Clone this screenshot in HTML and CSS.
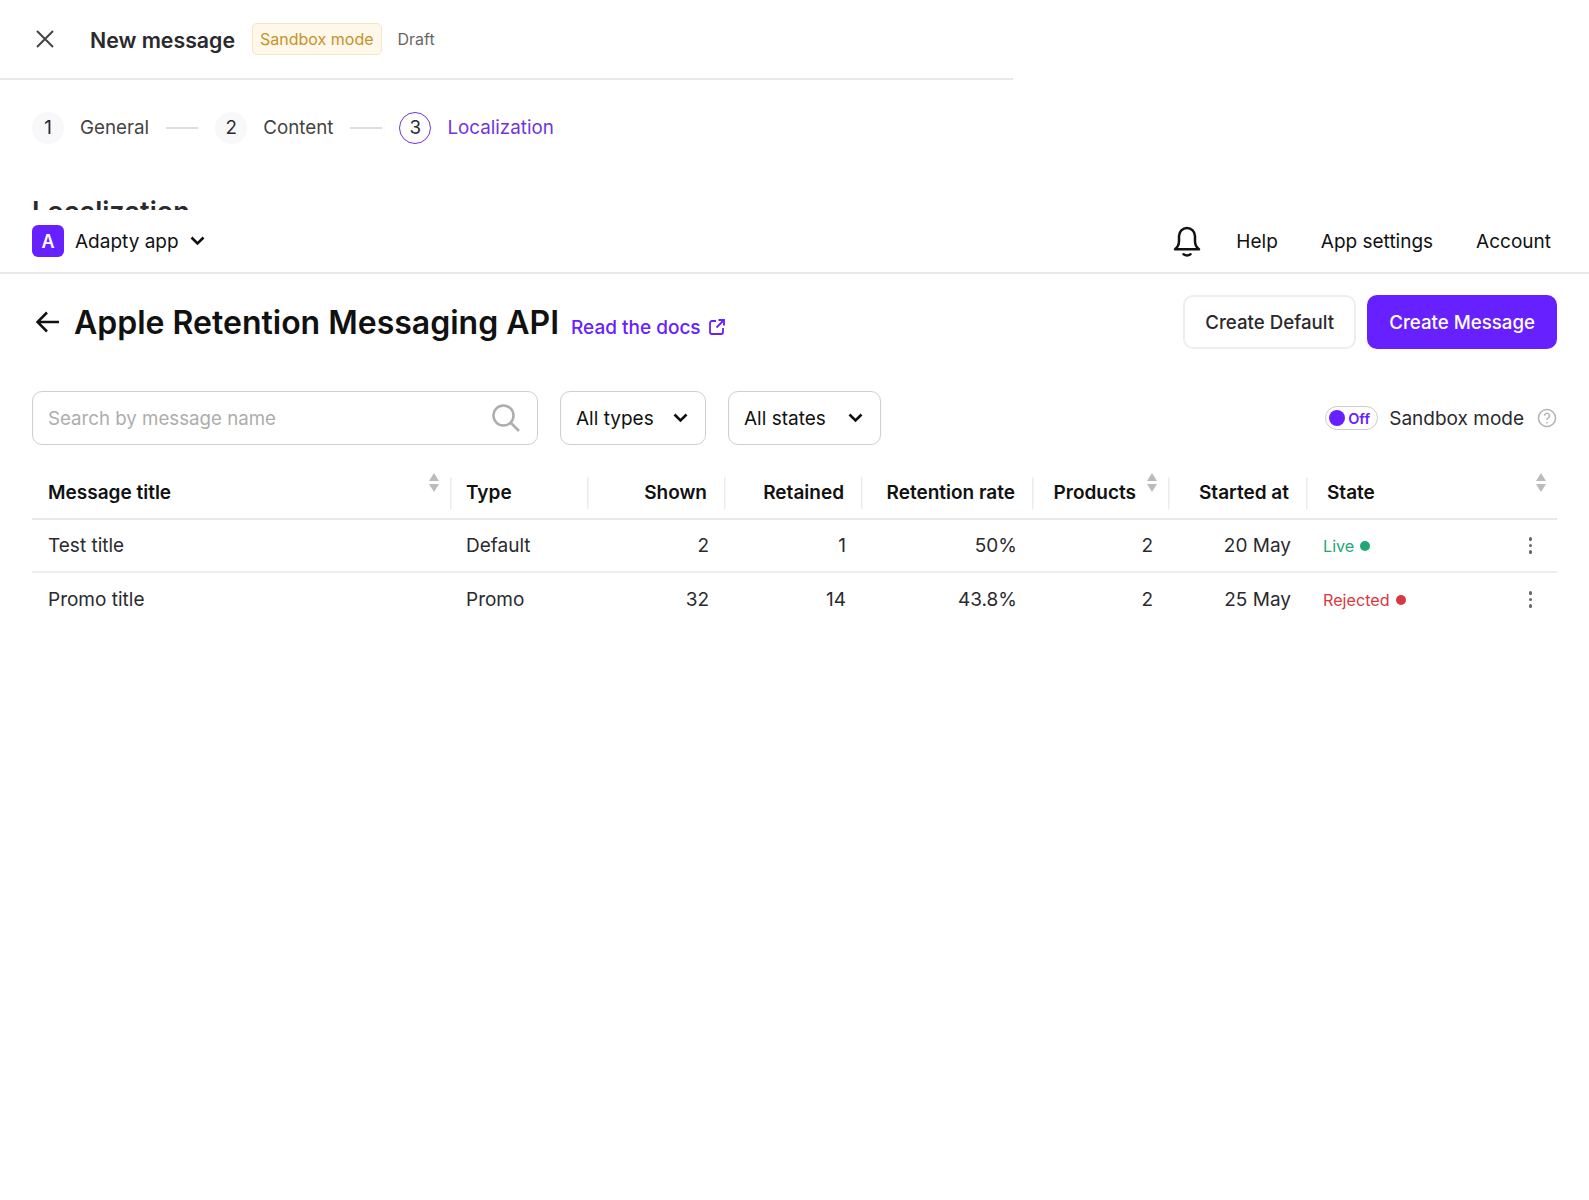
FILE: index.html
```html
<!DOCTYPE html>
<html lang="en">
<head>
<meta charset="UTF-8" />
<meta name="viewport" content="width=device-width, initial-scale=1" />
<title>Apple Retention Messaging API</title>
<link rel="stylesheet" href="styles.css">
</head>
<body>
  <section class="composer">
    <header class="composer-head">
      <svg class="close-icon" viewBox="0 0 18 18" width="18" height="18"><path d="M1 1l16 16M17 1L1 17" /></svg>
      <h2 class="composer-title">New message</h2>
      <span class="sandbox-tag">Sandbox mode</span>
      <span class="draft">Draft</span>
    </header>
    <ol class="steps">
      <li class="step"><span class="step-num">1</span>General</li>
      <li class="step-line"></li>
      <li class="step"><span class="step-num">2</span>Content</li>
      <li class="step-line"></li>
      <li class="step active"><span class="step-num">3</span>Localization</li>
    </ol>
    <h3 class="composer-section">Localization</h3>
  </section>

  <nav class="topbar">
    <div class="app-switch">
      <span class="app-logo">A</span>
      <span>Adapty app</span>
      <svg class="chevron" viewBox="0 0 15 10" width="15" height="10"><path d="M1.500 1.500L7.500 7.500l6-6" /></svg>
    </div>
    <div class="topbar-links">
      <svg class="bell" viewBox="0 0 28 32" width="28" height="32"><path d="M2 24.200c2.700-1.800 4-4 4-8.200V11a8 8 0 0 1 16 0v5c0 4.200 1.300 6.400 4 8.200z" /><path d="M10.500 29.200c2 1.400 5 1.400 7 0" /></svg>
      <a>Help</a>
      <a>App settings</a>
      <a>Account</a>
    </div>
  </nav>

  <main class="page">
    <div class="title-row">
      <svg class="back" viewBox="0 0 24 22" width="24" height="22"><path d="M23 11H2M11 1.500L1.500 11l9.500 9.500" /></svg>
      <h1 class="page-title">Apple Retention Messaging API</h1>
      <a class="docs-link">Read the docs
        <svg viewBox="0 0 16 16" width="16" height="16"><path d="M7 2H3a2 2 0 0 0-2 2v9a2 2 0 0 0 2 2h9a2 2 0 0 0 2-2V9M9.500 1H15v5.500M15 1L7.500 8.500" /></svg>
      </a>
      <div class="title-actions">
        <button type="button" class="btn">Create Default</button>
        <button type="button" class="btn primary">Create Message</button>
      </div>
    </div>

    <div class="filters">
      <div class="search">
        <span>Search by message name</span>
        <svg viewBox="0 0 28 28" width="28" height="28"><circle cx="11.500" cy="11.500" r="10" /><path d="M19 19l8 8" /></svg>
      </div>
      <div class="select types">All types
        <svg class="chevron" viewBox="0 0 15 10" width="15" height="10"><path d="M1.500 1.500L7.500 7.500l6-6" /></svg>
      </div>
      <div class="select states">All states
        <svg class="chevron" viewBox="0 0 15 10" width="15" height="10"><path d="M1.500 1.500L7.500 7.500l6-6" /></svg>
      </div>
      <div class="sandbox-toggle">
        <span class="toggle"><i></i>Off</span>
        <span>Sandbox mode</span>
        <svg class="help" viewBox="0 0 20 20" width="20" height="20"><circle cx="10" cy="10" r="8.500" /><path d="M7.500 7.800a2.500 2.500 0 1 1 3.800 2.100c-.9.500-1.300 1-1.300 1.900" /><circle class="help-dot" cx="10" cy="14.600" r=".9" /></svg>
      </div>
    </div>

    <div class="table">
      <div class="row head">
        <div class="cell sortable">Message title</div>
        <div class="cell">Type</div>
        <div class="cell num">Shown</div>
        <div class="cell num">Retained</div>
        <div class="cell num">Retention rate</div>
        <div class="cell num sortable products">Products</div>
        <div class="cell num">Started at</div>
        <div class="cell sortable">State</div>
      </div>
      <div class="row">
        <div class="cell">Test title</div>
        <div class="cell">Default</div>
        <div class="cell num">2</div>
        <div class="cell num">1</div>
        <div class="cell num">50%</div>
        <div class="cell num">2</div>
        <div class="cell num">20 May</div>
        <div class="cell state live"><span>Live</span><i class="dot"></i><span class="more"><i></i><i></i><i></i></span></div>
      </div>
      <div class="row">
        <div class="cell">Promo title</div>
        <div class="cell">Promo</div>
        <div class="cell num">32</div>
        <div class="cell num">14</div>
        <div class="cell num">43.8%</div>
        <div class="cell num">2</div>
        <div class="cell num">25 May</div>
        <div class="cell state rejected"><span>Rejected</span><i class="dot"></i><span class="more"><i></i><i></i><i></i></span></div>
      </div>
    </div>
  </main>
</body>
</html>
```

FILE: styles.css
```css
:root {
  --purple: #6720ff;
  --text: #2a2a2e;
  --line: #e8e8e8;
  --font-family: Inter, 'Liberation Sans', sans-serif;
}

* {
  box-sizing: border-box;
}

body {
  margin: 0;
  background-color: #fff;
  color: var(--text);
  font-family: var(--font-family);
  font-size: 19px;
}

/* composer panel, cut off by the app nav */
.composer {
  width: 1013px;
  height: 210px;
  overflow: hidden;
}

.composer-head {
  display: flex;
  align-items: center;
  height: 80px;
  padding-left: 36px;
  border-bottom: 2px solid var(--line);
}

.close-icon {
  fill: none;
  stroke: #444;
  stroke-width: 2;
  margin-right: 36px;
}

.composer-title {
  margin: 2px 17px 0 0;
  font-size: 21.300px;
  font-weight: 600;
}

.sandbox-tag {
  padding: 5px 7px;
  margin-right: 16px;
  color: #c8912c;
  background-color: #fdf8e9;
  border: 1px solid #f7e6c0;
  border-radius: 5px;
  font-size: 16px;
}

.draft {
  color: #666;
  font-size: 16px;
}

.steps {
  display: flex;
  align-items: center;
  gap: 17px;
  margin: 0;
  padding: 0 32px;
  list-style: none;
  height: 95px;
}

.step {
  display: flex;
  align-items: center;
  gap: 16px;
  font-size: 18.800px;
  color: #444;
}

.step-num {
  display: flex;
  align-items: center;
  justify-content: center;
  width: 32px;
  height: 32px;
  border-radius: 50%;
  background-color: #f8f8fa;
  color: var(--text);
}

.step-line {
  width: 32px;
  height: 2px;
  background-color: #ddd;
}

.step.active {
  color: #6e35e0;
}

.step.active .step-num {
  background-color: #fff;
  border: 1.500px solid #6e35e0;
  color: var(--text);
}

.composer-section {
  margin: 21px 0 0 32px;
  font-size: 27px;
  font-weight: 600;
  line-height: 32px;
}

/* app nav */
.topbar {
  display: flex;
  align-items: center;
  justify-content: space-between;
  height: 64px;
  padding: 0 38px 0 32px;
  border-bottom: 2px solid var(--line);
  color: #111;
}

.app-switch {
  display: flex;
  align-items: center;
  gap: 11px;
}

.app-logo {
  display: flex;
  align-items: center;
  justify-content: center;
  width: 32px;
  height: 32px;
  border-radius: 6px;
  background-color: var(--purple);
  color: #fff;
  font-weight: 600;
  font-size: 18px;
}

.chevron {
  fill: none;
  stroke: #111;
  stroke-width: 2.600;
}

.topbar-links {
  display: flex;
  align-items: center;
  gap: 43px;
}

.bell {
  fill: none;
  stroke: #111;
  stroke-width: 2.500;
  stroke-linejoin: round;
  stroke-linecap: round;
  margin-right: -8px;
}

/* page */
.page {
  padding: 21px 32px 0;
}

.title-row {
  display: flex;
  align-items: center;
  height: 54px;
}

.back {
  fill: none;
  stroke: #111;
  stroke-width: 2.500;
  margin: 0 14px 0 4px;
  flex: none;
}

.page-title {
  margin: 0 12px 0 0;
  font-size: 32px;
  font-weight: 600;
  color: #111;
}

.docs-link {
  display: flex;
  align-items: center;
  gap: 8px;
  margin-top: 10px;
  color: var(--purple);
  font-size: 19px;
  font-weight: 500;
}

.docs-link svg {
  fill: none;
  stroke: var(--purple);
  stroke-width: 1.800;
}

.title-actions {
  display: flex;
  gap: 11px;
  margin-left: auto;
}

.btn {
  height: 54px;
  padding: 0 20px;
  background-color: #fff;
  border: 2px solid #eee;
  border-radius: 10px;
  color: var(--text);
  font-family: inherit;
  font-size: 18.700px;
  font-weight: 500;
}

.btn.primary {
  background-color: var(--purple);
  border-color: var(--purple);
  color: #fff;
}

.filters {
  display: flex;
  align-items: center;
  gap: 22px;
  margin-top: 42px;
}

.search,
.select {
  display: flex;
  align-items: center;
  justify-content: space-between;
  height: 54px;
  padding: 0 17px 0 15px;
  border: 1.500px solid #cfcfcf;
  border-radius: 10px;
  color: #111;
}

.search {
  width: 506px;
  color: #adadad;
  font-size: 18.700px;
}

.search svg {
  fill: none;
  stroke: #adadad;
  stroke-width: 2.500;
}

.types {
  width: 146px;
}

.states {
  width: 153px;
}

.sandbox-toggle {
  display: flex;
  align-items: center;
  gap: 11px;
  margin-left: auto;
  color: var(--text);
}

.toggle {
  display: flex;
  align-items: center;
  gap: 3px;
  width: 53px;
  height: 24px;
  padding-left: 3px;
  border: 1.500px solid #ccc;
  border-radius: 12px;
  color: var(--purple);
  font-size: 14.500px;
  font-weight: 600;
}

.toggle i {
  width: 16px;
  height: 16px;
  border-radius: 50%;
  background-color: var(--purple);
}

.help {
  fill: none;
  stroke: #b5b5b5;
  stroke-width: 1.600;
  margin-left: 2px;
}

.help-dot {
  fill: #b5b5b5;
  stroke: none;
}

/* table */
.table {
  margin-top: 25px;
}

.row {
  display: grid;
  grid-template-columns: 418px 137px 137px 137px 171px 136px 138px 251px;
  height: 53px;
  align-items: center;
}

.row + .row {
  border-bottom: 2px solid #eee;
}

.row:last-child {
  border-bottom: 0;
}

.row.head {
  height: 50px;
  border-bottom: 2px solid var(--line);
  font-weight: 600;
  color: #111;
  align-items: stretch;
  padding-bottom: 0;
}

.cell {
  padding: 0 16px;
}

.cell.num {
  text-align: right;
  padding-right: 15px;
}

.head .cell {
  position: relative;
  padding-top: 11px;
  height: 48px;
}

.head .cell + .cell {
  box-shadow: inset 1.500px 0 0 #ececec;
  height: 32px;
  margin-top: 7px;
  padding-top: 4px;
}

.head .cell:last-child {
  padding-left: 21px;
}

.head .num {
  padding-right: 17px;
}

.head .products {
  padding-right: 32px;
}

/* sort arrows sit in the top right of the header cell */
.sortable::before,
.sortable::after {
  content: "";
  position: absolute;
  right: 11px;
  border-left: 5.500px solid transparent;
  border-right: 5.500px solid transparent;
}

.sortable::before {
  top: 3px;
  border-bottom: 8px solid #bbb;
}

.sortable::after {
  top: 14px;
  border-top: 8px solid #bbb;
}

.head .cell + .sortable::before {
  top: -4px;
}

.head .cell + .sortable::after {
  top: 7px;
}

.state {
  display: flex;
  align-items: center;
  gap: 6px;
  font-size: 16.200px;
  padding-left: 17px;
}

.dot {
  width: 10px;
  height: 10px;
  border-radius: 50%;
}

.live {
  color: #1fa774;
}

.rejected {
  color: #d8393f;
}

.live .dot {
  background-color: #1fa774;
}

.rejected .dot {
  background-color: #d8393f;
}

.more {
  display: flex;
  flex-direction: column;
  gap: 3px;
  margin-left: auto;
  margin-right: 9px;
}

.more i {
  width: 3.500px;
  height: 3.500px;
  border-radius: 50%;
  background-color: #666;
}
```
